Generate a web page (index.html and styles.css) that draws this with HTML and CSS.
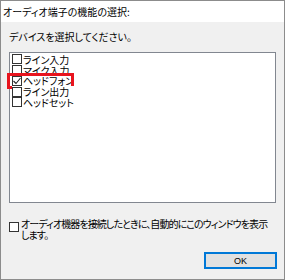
FILE: index.html
```html
<!DOCTYPE html>
<html lang="ja">
<head>
	<meta charset="UTF-8">
	<title>オーディオ端子の機能の選択</title>
	<link rel="stylesheet" href="styles.css">
</head>
<body>
	<!-- ダイアログ全体 -->
	<div class="dialog">
		<div class="title">オーディオ端子の機能の選択:</div>

		<div class="content">
			<p class="prompt">デバイスを選択してください。</p>

			<!-- デバイス一覧 -->
			<div class="list">
				<div class="item"><span class="box"></span>ライン入力</div>
				<div class="item"><span class="box"></span>マイク入力</div>
				<div class="item selected">
					<span class="box">
						<svg width="8" height="8" viewBox="0 0 8 8"><path d="M0.5 4 L3 6.5 L7.5 1" fill="none" stroke="#222" stroke-width="1.1"/></svg>
					</span>ヘッドフォン
					<span class="mark"></span>
				</div>
				<div class="item"><span class="box"></span>ライン出力</div>
				<div class="item"><span class="box"></span>ヘッドセット</div>
			</div>

			<div class="auto">
				<span class="box"></span>
				<span class="auto-text">オーディオ機器を接続したときに、自動的にこのウィンドウを表示<br>します。</span>
			</div>

			<div class="footer">
				<button class="ok">OK</button>
			</div>
		</div>
	</div>
</body>
</html>
```

FILE: styles.css
```css
*{
	margin: 0;
	padding: 0;
	box-sizing: border-box;
}

body{
	width: 285px;
	height: 280px;
	font-family: "Noto Sans CJK JP", "Liberation Sans", sans-serif;
	font-size: 10px;
	font-feature-settings: "palt";
	color: #000;
}

/*ダイアログ枠*/
.dialog{
	width: 285px;
	height: 280px;
	border: 1px solid #8c8c8c;
	display: flex;
	flex-direction: column;
}

.title{
	height: 21px;
	background-color: #fff;
	padding: 4px 0 0 2px;
	line-height: 13px;
}

.content{
	flex: 1;
	background-color: #f0f0f0;
	padding: 8px 8px 0 8px;
	display: flex;
	flex-direction: column;
}

.prompt{
	line-height: 14px;
	height: 22px;
}

/*リストボックス*/
.list{
	height: 151px;
	border: 1px solid #828790;
	background-color: #fff;
	padding: 1px 0 0 2px;
}

.item{
	position: relative;
	height: 10.75px;
	line-height: 11px;
	display: flex;
	align-items: center;
	background-color: #fff;
}

.box{
	display: inline-flex;
	align-items: center;
	justify-content: center;
	width: 10px;
	height: 10px;
	border: 1px solid #333;
	background-color: #fff;
	margin-right: 1px;
	flex-shrink: 0;
}

/*赤い囲み*/
.mark{
	position: absolute;
	left: -5px;
	top: -3px;
	width: 67px;
	height: 16px;
	border: 3px solid #e8141e;
}

.auto{
	display: flex;
	align-items: flex-start;
	margin-top: 15px;
	height: 34px;
}

.auto .box{
	margin-top: 4px;
	margin-right: 2px;
}

.auto-text{
	line-height: 11px;
	width: 255px;
	letter-spacing: -0.9px;
}

.footer{
	display: flex;
	justify-content: flex-end;
}

.ok{
	width: 73px;
	height: 17px;
	margin-right: -1px;
	border: 2px solid #0078d7;
	background-color: #e1e1e1;
	font-family: "Liberation Sans", sans-serif;
	font-size: 9px;
	color: #000;
}
```
